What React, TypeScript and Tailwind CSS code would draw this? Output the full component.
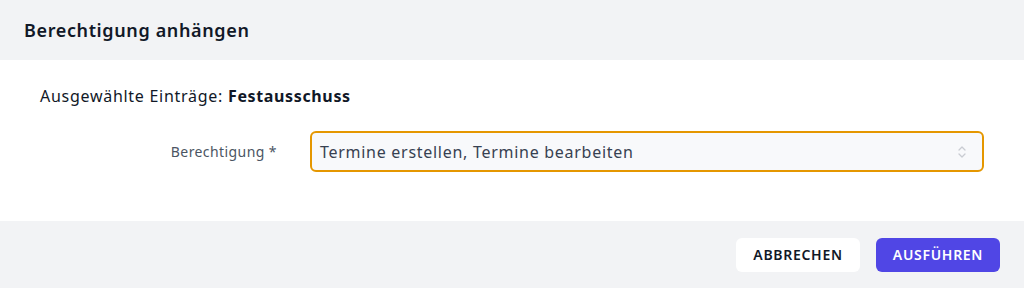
import React from "react";

export default function App() {
  return (
    <div className="w-[1024px] h-[288px] flex flex-col bg-white" style={{ fontFamily: "'Noto Sans', Lato, sans-serif" }}>
      <div className="h-[60px] bg-[#f2f3f5] flex items-center px-6">
        <h1 className="text-[18px] font-semibold tracking-[0.035em] text-[#111827]">Berechtigung anhängen</h1>
      </div>
      <div className="h-[161px] px-10 pt-[24px]">
        <p className="text-[16px] text-[#111827] tracking-[0.045em]">
          Ausgewählte Einträge: <span className="font-bold tracking-[0.04em]">Festausschuss</span>
        </p>
        <div className="flex items-center mt-[23px] -mr-[56px]">
          <label className="w-[237px] text-right text-[14px] tracking-[0.03em] text-[#4b5563]">Berechtigung *</label>
          <div className="ml-[33px] w-[674px] h-[41px] rounded-md border-2 border-[#e59700] bg-[#f8f9fb] flex items-center justify-between pl-[8px] pr-[14px]">
            <span className="text-[16px] tracking-[0.045em] text-[#374151]">Termine erstellen, Termine bearbeiten</span>
            <svg width="12" height="18" viewBox="0 0 12 18" fill="none" stroke="#c9ccd2" strokeWidth="1.3" strokeLinecap="round" strokeLinejoin="round">
              <path d="M3 7l3-3 3 3" />
              <path d="M3 11l3 3 3-3" />
            </svg>
          </div>
        </div>
      </div>
      <div className="flex-1 bg-[#f2f3f5] flex items-center justify-end gap-4 px-6">
        <button className="w-[124px] h-[34px] rounded-md bg-white text-[14px] font-semibold tracking-wider text-[#111827]">ABBRECHEN</button>
        <button className="w-[124px] h-[34px] rounded-md bg-[#5046e5] text-[14px] font-semibold tracking-wider text-white">AUSFÜHREN</button>
      </div>
    </div>
  );
}
